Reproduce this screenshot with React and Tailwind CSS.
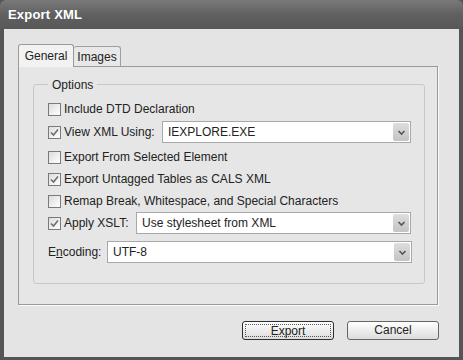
import React from 'react';

const font = { fontFamily: '"Liberation Sans", Arial, sans-serif' };

const Checkbox = ({ checked }) => (
  <span className="w-[13px] h-[13px] shrink-0 border border-[#7a7a7a] bg-gradient-to-br from-[#dcdcdc] to-white flex items-center justify-center">
    {checked && (
      <svg width="9" height="9" viewBox="0 0 9 9">
        <path d="M1 4.5 L3.5 7 L8 1.5" fill="none" stroke="#6e6e6e" strokeWidth="1.6" />
      </svg>
    )}
  </span>
);

const Select = ({ value, className }) => (
  <div className={`h-[22px] bg-white border border-[#a8a8a8] flex items-center ${className}`}>
    <span className="flex-1 pl-[5px] text-[12px] text-[#222]">{value}</span>
    <span className="w-[16px] h-[18px] mr-[1px] rounded-[2px] bg-gradient-to-b from-[#dedede] to-[#c4c4c4] flex items-center justify-center">
      <svg width="9" height="7" viewBox="0 0 9 7">
        <path d="M1.5 2 L4.5 5 L7.5 2" fill="none" stroke="#555" strokeWidth="1.6" />
      </svg>
    </span>
  </div>
);

const CheckRow = ({ checked, label, className = '' }) => (
  <div className={`flex items-center h-[20px] ${className}`}>
    <Checkbox checked={checked} />
    <span className="ml-[3px] text-[12px] text-[#222]">{label}</span>
  </div>
);

export default function App() {
  return (
    <div style={font} className="w-[463px] h-[360px] bg-[#555] flex flex-col overflow-hidden">
      <div className="h-[29px] shrink-0 bg-gradient-to-b from-[#7a7a7a] via-[#606060] to-[#585858] flex items-center pl-[8px] rounded-t-[6px]">
        <span className="text-white font-bold text-[13px] tracking-[0.2px]">Export XML</span>
      </div>
      <div className="flex-1 bg-[#e4e4e4] ml-[4px] mr-[4px] mb-[3px] flex flex-col">
        <div className="pt-[15px] pl-[14px] flex items-end">
          <div className="w-[56px] h-[23px] bg-[#f2f2f2] border border-[#9a9a9a] border-b-0 rounded-t-[3px] flex items-center justify-center text-[12px] text-[#222] relative z-10 -mb-px">
            General
          </div>
          <div className="w-[47px] h-[20px] bg-[#e8e8e8] border border-[#a0a0a0] border-b-0 border-l-0 rounded-t-[3px] flex items-center justify-center text-[12px] text-[#222]">
            Images
          </div>
        </div>
        <div className="ml-[14px] w-[420px] h-[239px] border border-[#9a9a9a] bg-[#e6e6e6] shadow-[1px_1px_0_#fafafa] pt-[17px]">
          <div className="ml-[14px] w-[392px] h-[200px] border border-[#c8c8c8] rounded-[3px] relative pl-[14px] pt-[14px]">
            <span className="absolute -top-[9px] left-[14px] px-[4px] bg-[#e6e6e6] text-[12px] text-[#222]">Options</span>
            <CheckRow label="Include DTD Declaration" />
            <div className="flex items-center h-[22px] mt-[2px]">
              <Checkbox checked />
              <span className="ml-[3px] text-[12px] text-[#222] w-[98px]">View XML Using:</span>
              <Select value="IEXPLORE.EXE" className="w-[249px]" />
            </div>
            <CheckRow label="Export From Selected Element" className="mt-[4px]" />
            <CheckRow checked label="Export Untagged Tables as CALS XML" className="mt-[2px]" />
            <CheckRow label="Remap Break, Whitespace, and Special Characters" className="mt-[2px]" />
            <div className="flex items-center h-[22px] mt-[1px]">
              <Checkbox checked />
              <span className="ml-[3px] text-[12px] text-[#222] w-[72px]">Apply XSLT:</span>
              <Select value="Use stylesheet from XML" className="w-[275px]" />
            </div>
            <div className="flex items-center h-[22px] mt-[7px]">
              <span className="text-[12px] text-[#222] w-[59px]">
                E<span className="underline">n</span>coding:
              </span>
              <Select value="UTF-8" className="w-[305px]" />
            </div>
          </div>
        </div>
        <div className="flex justify-end gap-[13px] pr-[20px] mt-[16px]">
          <button className="w-[92px] h-[19px] rounded-[3px] border border-[#2e2e2e] bg-gradient-to-b from-white to-[#dcdcdc] p-[2px]">
            <span className="block w-full h-full border border-dotted border-[#555] text-[12px] leading-[13px] text-[#222]">Export</span>
          </button>
          <button className="w-[92px] h-[19px] rounded-[3px] border border-[#666] bg-gradient-to-b from-white to-[#dcdcdc] text-[12px] leading-[17px] text-[#222]">
            Cancel
          </button>
        </div>
      </div>
    </div>
  );
}
